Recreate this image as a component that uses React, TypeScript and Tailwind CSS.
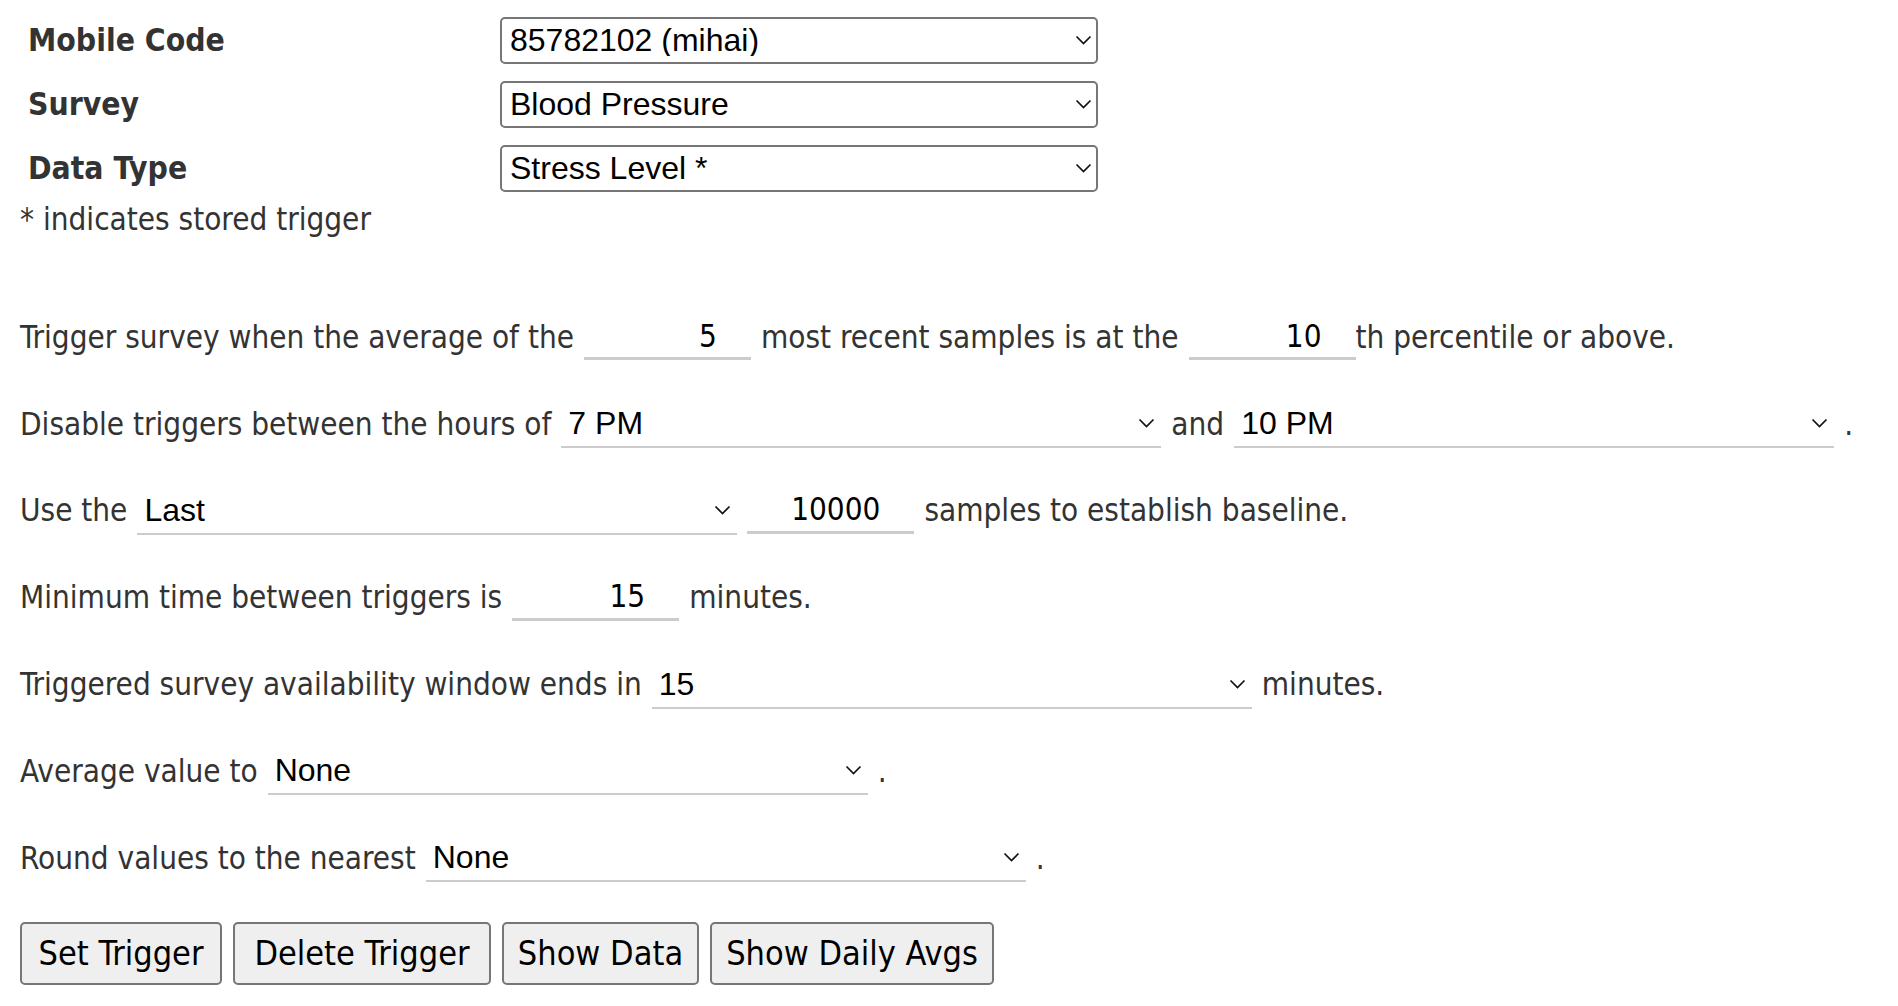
import React from "react";

const bodyFont = "font-['DejaVu_Sans_Condensed','DejaVu_Sans',sans-serif]";
const arial = "font-['Liberation_Sans',Arial,sans-serif]";

function Chevron({ right }: { right: string }) {
  return (
    <svg
      className={`pointer-events-none absolute top-1/2 -translate-y-1/2 ${right}`}
      width="17"
      height="10"
      viewBox="0 0 17 10"
    >
      <path d="M1.5 1.5l7 7 7-7" fill="none" stroke="#111" strokeWidth="1.7" />
    </svg>
  );
}

function BoxSelect({ value }: { value: string }) {
  return (
    <div className="relative h-[47px] w-[598px]">
      <select
        defaultValue={value}
        className={`h-full w-full appearance-none rounded-[5px] border-2 border-[#767676] bg-white pl-[8px] text-[32px] text-black outline-none ${arial}`}
      >
        <option>{value}</option>
      </select>
      <Chevron right="right-[6px]" />
    </div>
  );
}

function LineSelect({ value }: { value: string }) {
  return (
    <div className="relative h-[48px] w-[600px] shrink-0 border-b-2 border-[#cccccc]">
      <select
        defaultValue={value}
        className={`h-full w-full appearance-none bg-transparent pl-[7px] text-[32px] text-black outline-none ${arial}`}
      >
        <option>{value}</option>
      </select>
      <Chevron right="right-[6px]" />
    </div>
  );
}

function NumInput({ value }: { value: string }) {
  return (
    <input
      defaultValue={value}
      className={`h-[46px] w-[167px] shrink-0 border-b-[3px] border-[#cccccc] bg-transparent pr-[34px] text-right text-[31.2px] text-black outline-none ${bodyFont}`}
    />
  );
}

function Row({ children }: { children: React.ReactNode }) {
  return <div className="flex h-[86.8px] items-center gap-[10px] whitespace-nowrap">{children}</div>;
}

const fields = [
  { label: "Mobile Code", value: "85782102 (mihai)" },
  { label: "Survey", value: "Blood Pressure" },
  { label: "Data Type", value: "Stress Level *" },
];

const buttons = [
  { label: "Set Trigger", w: "w-[202px]" },
  { label: "Delete Trigger", w: "w-[258px]" },
  { label: "Show Data", w: "w-[197px]" },
  { label: "Show Daily Avgs", w: "w-[284px]" },
];

export default function App() {
  return (
    <div className={`h-[1006px] w-full bg-white pl-[20px] pt-[8px] text-[31.2px] leading-none text-[#333333] ${bodyFont}`}>
      {fields.map((f) => (
        <div key={f.label} className="flex h-[64px] items-center">
          <div className="w-[480px] pl-[8px] pt-[2px] text-[31.6px] font-bold">{f.label}</div>
          <BoxSelect value={f.value} />
        </div>
      ))}
      <div className="flex h-[39px] items-center">* indicates stored trigger</div>

      <div className="mt-[55px]">
        <Row>
          <span>Trigger survey when the average of the</span>
          <NumInput value="5" />
          <span>most recent samples is at the</span>
          <div className="flex items-center">
            <NumInput value="10" />
            <span>th percentile or above.</span>
          </div>
        </Row>
        <Row>
          <span>Disable triggers between the hours of</span>
          <LineSelect value="7 PM" />
          <span>and</span>
          <LineSelect value="10 PM" />
          <span>.</span>
        </Row>
        <Row>
          <span>Use the</span>
          <LineSelect value="Last" />
          <NumInput value="10000" />
          <span>samples to establish baseline.</span>
        </Row>
        <Row>
          <span>Minimum time between triggers is</span>
          <NumInput value="15" />
          <span>minutes.</span>
        </Row>
        <Row>
          <span>Triggered survey availability window ends in</span>
          <LineSelect value="15" />
          <span>minutes.</span>
        </Row>
        <Row>
          <span>Average value to</span>
          <LineSelect value="None" />
          <span>.</span>
        </Row>
        <Row>
          <span>Round values to the nearest</span>
          <LineSelect value="None" />
          <span>.</span>
        </Row>
      </div>

      <div className="mt-[20px] flex gap-[11px]">
        {buttons.map((b) => (
          <button
            key={b.label}
            className={`h-[63px] ${b.w} rounded-[5px] border-2 border-[#767676] bg-[#efefef] px-0 text-[34px] text-black`}
          >
            {b.label}
          </button>
        ))}
      </div>
    </div>
  );
}
